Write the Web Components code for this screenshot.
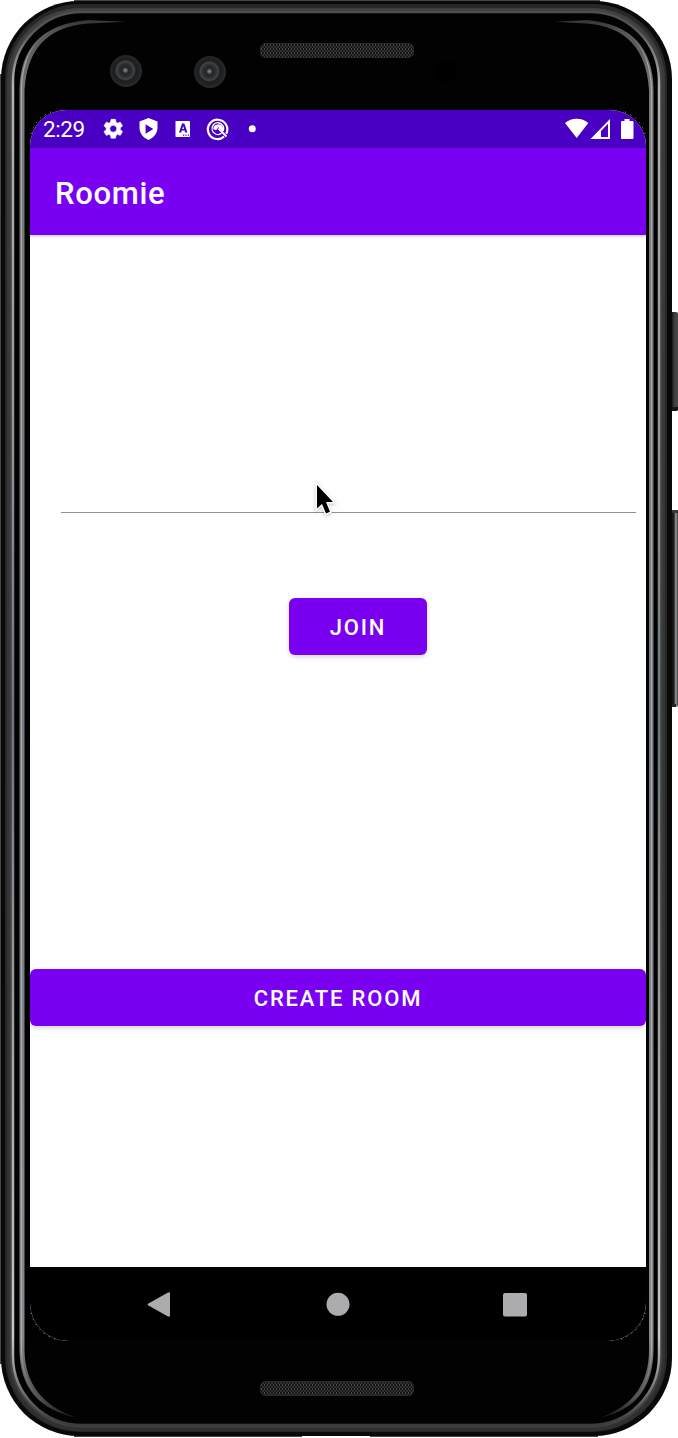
<!DOCTYPE html>
<html lang="en">
<head>
<meta charset="utf-8">
<title>Roomie</title>
<style>
html,body{margin:0;background:#fefefe;width:678px;height:1438px;overflow:hidden;font-family:Roboto,"Liberation Sans",sans-serif}
</style>
</head>
<body>
<phone-device>
  <status-bar time="2:29"></status-bar>
  <app-bar>Roomie</app-bar>
  <join-screen>
    <text-field></text-field>
    <material-button class="join">Join</material-button>
    <material-button class="create">Create room</material-button>
  </join-screen>
  <nav-bar></nav-bar>
</phone-device>
<mouse-pointer></mouse-pointer>
<script>
const define = (name, html, init) => customElements.define(name, class extends HTMLElement {
  constructor() {
    super();
    this.attachShadow({mode: 'open'}).innerHTML = html;
  }
  connectedCallback() { if (init) init(this); }
});

define('phone-device', `
<style>
:host{display:block;position:relative;width:678px;height:1438px}
.frame{position:absolute;inset:0;display:block}
.glass{position:relative;box-sizing:border-box;height:1438px;padding:110px 32px 97px 30px}
.screen{display:flex;flex-direction:column;height:1231px;width:616px;border-radius:36px 36px 38px 38px;overflow:hidden;background:#fefefe}
</style>
<svg class="frame" width="678" height="1438" viewBox="0 0 678 1438">
  <defs>
    <linearGradient id="edge" gradientUnits="userSpaceOnUse" x1="0" y1="0" x2="0" y2="1438">
      <stop offset="0" stop-color="#4b4b4b"/><stop offset=".02" stop-color="#555"/><stop offset=".06" stop-color="#b2b2b4"/>
      <stop offset=".3" stop-color="#92959a"/><stop offset=".5" stop-color="#6d747c"/><stop offset=".75" stop-color="#a5a7aa"/>
      <stop offset=".93" stop-color="#c5c6c8"/><stop offset=".965" stop-color="#777"/><stop offset=".99" stop-color="#3c3c3c"/>
    </linearGradient>
    <linearGradient id="inner" gradientUnits="userSpaceOnUse" x1="0" y1="20" x2="0" y2="1420">
      <stop offset="0" stop-color="#333"/><stop offset=".008" stop-color="#555"/><stop offset=".05" stop-color="#777"/>
      <stop offset=".5" stop-color="#737980"/><stop offset=".94" stop-color="#85878b"/><stop offset=".985" stop-color="#4d4e50"/><stop offset="1" stop-color="#111"/>
    </linearGradient>
    <linearGradient id="shine" gradientUnits="userSpaceOnUse" x1="0" y1="20" x2="0" y2="1420">
      <stop offset="0" stop-color="#444" stop-opacity="0"/><stop offset=".03" stop-color="#aaa"/>
      <stop offset=".95" stop-color="#aaaaae"/><stop offset="1" stop-color="#444" stop-opacity="0"/>
    </linearGradient>
    <linearGradient id="metal" x1="0" y1="0" x2="0" y2="1">
      <stop offset="0" stop-color="#3a3a3a"/><stop offset="1" stop-color="#303030"/>
    </linearGradient>
    <linearGradient id="key1" x1="0" x2="1"><stop offset="0" stop-color="#181818"/><stop offset=".4" stop-color="#3f3f3f"/><stop offset="1" stop-color="#494949"/></linearGradient>
    <linearGradient id="key2" x1="0" x2="1"><stop offset="0" stop-color="#111"/><stop offset=".35" stop-color="#222"/><stop offset=".65" stop-color="#a0a0a0"/><stop offset="1" stop-color="#383838"/></linearGradient>
    <pattern id="mesh" width="3" height="4" patternUnits="userSpaceOnUse">
      <rect width="3" height="4" fill="#151515"/><rect width="1" height="2" fill="#474747"/><rect x="1.500" y="2" width="1" height="2" fill="#474747"/>
    </pattern>
    <radialGradient id="lens" cx=".48" cy=".48" r=".5"><stop offset="0" stop-color="#8a969c"/><stop offset=".12" stop-color="#47545a"/><stop offset=".22" stop-color="#1c2327"/><stop offset=".45" stop-color="#333"/><stop offset=".56" stop-color="#444"/><stop offset=".66" stop-color="#1d1f20"/><stop offset=".8" stop-color="#1c2226"/><stop offset="1" stop-color="#292929"/></radialGradient>
  </defs>
  <path d="M672 312h4q2 0 2 2v95q0 2-2 2h-4z" fill="url(#key1)"/>
  <path d="M672 407h6v3l-2 1h-4z" fill="#151515"/>
  <path d="M672 510h4q2 0 2 2v193q0 2-2 2h-4z" fill="url(#key2)"/>
  <path d="M672 510h6v3h-6z" fill="#383838"/><path d="M672 704h4v3h-4z" fill="#222"/>
  <path d="M0 74H3V1364H0zM74 0H600V3H74zM74 1434H302V1437H74zM370 1434H598V1437H370z" fill="#454848"/>
  <rect x="1" y="1" width="671" height="1435" rx="78" fill="#090909"/>
  <rect x="5" y="4" width="662" height="1428" rx="75" fill="#272727"/>
  <rect x="7" y="8" width="658" height="1423" rx="73" fill="url(#metal)"/>
  <rect x="11" y="10" width="650" height="1416" rx="70" fill="none" stroke="#414141" stroke-width="3"/>
  <rect x="13" y="12" width="646" height="1413" rx="69" fill="#020202" stroke="url(#edge)" stroke-width="2.500"/>
  <g fill="url(#inner)">
    <path d="M126 21.800L88 20Q20 26 19.500 90V1350Q20 1406 76 1417.500Q25 1400 24.500 1350V90Q28 28 88 23.500z"/>
    <path d="M555 21.800L587 20Q653 26 653.500 90V1350Q653 1406 601 1417.500Q649 1400 649 1350V90Q645 28 587 23.500z"/>
  </g>
  <path fill="none" d="M88 21.500Q22 25 21.500 90V1350Q22 1400 65 1413M589 21.500Q650 25 651.500 90V1350Q651 1400 609 1413" stroke="url(#shine)" stroke-width="1.200"/>
  <g stroke="#272929"><rect x="260.500" y="43.500" width="153" height="14" rx="5" fill="url(#mesh)"/><rect x="260.500" y="1381.500" width="153" height="14" rx="5" fill="url(#mesh)"/></g>
  <circle cx="126" cy="71" r="16" fill="url(#lens)"/><circle cx="210" cy="72" r="16" fill="url(#lens)"/>
  <circle cx="445" cy="71" r="11.500" fill="#000"/>
</svg>
<div class="glass"><div class="screen"><slot></slot></div></div>
<svg class="frame" width="678" height="1438" viewBox="0 0 678 1438" fill="none" stroke="#aaa" stroke-width="1" stroke-dasharray="1 5">
  <path d="M31 1313Q37 1335 60 1340.500M645 1313Q639 1335 616 1340.500M31 134Q36 116 54 111M645 134Q640 116 622 111"/>
</svg>`);

define('status-bar', `
<style>
:host{display:flex;align-items:center;box-sizing:border-box;height:38px;flex:none;padding:0 11px 0 13px;background:#4900c2;color:#fff}
time{font-size:22.500px;line-height:38px;width:42px;letter-spacing:-.4px;white-space:nowrap}
svg{display:block;fill:#fff;flex:none}
.spacer{flex:1}
</style>
<time></time>
<svg width="180" height="38" viewBox="85 110 180 38">
  <path stroke="#fff" stroke-width=".7" transform="translate(101.500 117) scale(.98)" d="M19.140 12.940c.04-.3.06-.61.06-.94s-.02-.64-.07-.94l2.030-1.580a.49.490 0 0 0 .12-.61l-1.920-3.320a.49.490 0 0 0-.59-.22l-2.390.96a7 7 0 0 0-1.620-.94L14.400 2.810A.48.480 0 0 0 13.920 2.400h-3.840a.47.470 0 0 0-.47.410L9.250 5.350a7 7 0 0 0-1.620.94l-2.390-.96a.48.480 0 0 0-.59.220L2.740 8.870a.47.470 0 0 0 .12.610l2.030 1.580a7 7 0 0 0 0 1.880l-2.030 1.580a.49.490 0 0 0-.12.610l1.920 3.320c.12.220.37.290.59.220l2.390-.96c.5.380 1.030.7 1.620.94l.36 2.540c.5.240.24.410.48.410h3.840c.24 0 .44-.17.470-.41l.36-2.540a7 7 0 0 0 1.620-.94l2.390.96c.22.080.47 0 .59-.22l1.920-3.320a.47.470 0 0 0-.12-.61zM12 15.600a3.600 3.600 0 1 1 0-7.200 3.600 3.600 0 0 1 0 7.200z"/>
  <path fill-rule="evenodd" d="M148.500 118l9 3.500v6.500c0 5-4 10-9 12-5-2-9-7-9-12v-6.500zM145.600 124.300v9.400l7.700-4.700z"/>
  <rect x="175.500" y="121" width="14.500" height="16" rx=".8"/>
  <path d="M182 123.500h2.400l3 9h-2.200l-.6-1.900h-2.800l-.6 1.900H179zm1.200 2.600-.9 2.800h1.800zM183 134.500h1.200v1.200H183zm2.400 0h1.200v1.200h-1.200zm2.400 0h1.200v1.200h-1.200z" fill="#4900c2" fill-rule="evenodd"/>
  <g fill="none" stroke="#fff"><path d="M224 136.700A9.700 9.700 0 1 1 226.300 133.700" stroke-width="2.200"/><path d="M221.500 133.300A5.900 5.900 0 1 1 223.300 131" stroke-width="1.300"/></g>
  <path d="M213.200 129a5 5 0 0 1 9.800-1v4l-4.500-4.700-2.500 3z"/>
  <path d="M218.500 128.500l8 8" stroke="#fff" stroke-width="2"/>
  <circle cx="252.300" cy="128.700" r="3.500"/>
</svg>
<div class="spacer"></div>
<svg width="70" height="38" viewBox="565 110 70 38">
  <path d="M576.700 138 565 123q5-4.300 11.700-4.300T588.300 123z"/>
  <path fill-rule="evenodd" d="M590.500 139 610 119v20zM601 137h7v-13.300L601 131z"/>
  <path d="M624.500 119h5v2h3q1 0 1 1v16q0 1-1 1H622q-1 0-1-1v-16q0-1 1-1h2.500z"/>
</svg>`, el => el.shadowRoot.querySelector('time').textContent = el.getAttribute('time'));

define('app-bar', `
<style>
:host{display:flex;align-items:center;flex:none;box-sizing:border-box;height:87px;padding:3px 0 0 25px;background:#7a00f2;color:#fff;font-size:31px;font-weight:500;letter-spacing:.7px;box-shadow:0 1px 3px rgba(0,0,0,.25);z-index:1}
</style><slot></slot>`);

define('join-screen', `
<style>
:host{display:flex;flex-direction:column;flex:1;min-height:0}
::slotted(text-field){margin:235px 10px 0 31px}
::slotted(.join){width:138px;margin:85px 0 0 259px}
::slotted(.create){margin-top:314.400px}
</style><slot></slot>`);

define('text-field', `
<style>
:host{display:block;height:43px;background:linear-gradient(#909090,#909090) 0 41.500px/100% 1.500px no-repeat}
</style>`);

define('material-button', `
<style>
:host{display:flex;align-items:center;justify-content:center;box-sizing:border-box;height:57px;padding-top:1.500px;border-radius:6px;background:#7a00f2;color:#fff;font-size:22px;font-weight:500;letter-spacing:1.800px;text-transform:uppercase;box-shadow:0 2px 4px rgba(0,0,0,.16)}
</style><slot></slot>`);

define('nav-bar', `
<style>
:host{display:grid;grid-template-columns:repeat(3,178px);flex:none;height:74px;padding:0 41px;background:#000}
svg{display:block;width:26px;height:26px;fill:#acacae;place-self:center}
</style>
<svg viewBox="0 0 26 26"><path d="M1 12.700Q0 13.500 1 14.300L21 25.500Q23 26 23 24.500V2.500Q23 .5 21 1.500z"/></svg>
<svg viewBox="0 0 26 26"><circle cx="13" cy="13.300" r="11.500"/></svg>
<svg viewBox="0 0 26 26"><rect x="0" y="2" width="24" height="23.500" rx="2"/></svg>`);

define('mouse-pointer', `
<style>
:host{position:absolute;left:312px;top:480px;width:30px;height:40px}
svg{display:block;filter:drop-shadow(0 1px 1.500px rgba(0,0,0,.25))}
</style>
<svg width="30" height="40"><path d="M5 5v23.500l5-4.500 4 9.500 4-1.700L14 22h7z" fill="#000" stroke="#fff" stroke-width="3" paint-order="stroke"/></svg>`);
</script>
</body>
</html>
